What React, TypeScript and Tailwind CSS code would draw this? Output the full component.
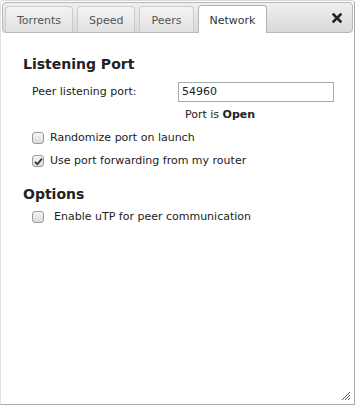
import React from 'react';

const font = { fontFamily: '"DejaVu Sans", Verdana, sans-serif' };

const tabs = ['Torrents', 'Speed', 'Peers', 'Network'];

function Box({ checked }: { checked?: boolean }) {
  return (
    <span className="w-[12px] h-[12px] rounded-[3px] border border-[#9a9a9a] bg-gradient-to-b from-[#f4f4f4] to-[#dcdcdc] flex items-center justify-center shrink-0">
      {checked && (
        <svg width="9" height="9" viewBox="0 0 9 9">
          <path d="M1 4.8 L3.4 7.2 L8 1.6" fill="none" stroke="#333" strokeWidth="1.8" />
        </svg>
      )}
    </span>
  );
}

export default function App() {
  return (
    <div className="w-[358px] h-[405px] bg-white text-[11px] text-[#222]" style={font}>
      <div className="w-[355px] h-[405px] border border-[#aaa] border-l-[#e2e2e2] border-t-[#d8d8d8] rounded-t-[4px] p-[1px] flex flex-col relative bg-white">
        {/* barra de pestañas */}
        <div className="h-[31px] rounded-[4px] border border-[#b8b8b8] bg-gradient-to-b from-[#efefef] to-[#d9d9d9] flex items-end pl-[2px] relative">
          <div className="flex gap-[4px] items-end">
            {tabs.map((t) => {
              const active = t === 'Network';
              return (
                <div
                  key={t}
                  className={
                    active
                      ? 'h-[28px] px-[11px] pt-[7px] bg-white border border-b-0 border-[#b3b3b3] rounded-t-[4px] text-[#333] -mb-[1px]'
                      : 'h-[26px] px-[11px] pt-[6px] bg-gradient-to-b from-[#f3f3f3] to-[#e2e2e2] border border-b-0 border-[#cccccc] rounded-t-[4px] text-[#555]'
                  }
                >
                  {t}
                </div>
              );
            })}
          </div>
          <svg className="absolute right-[10px] top-[10px]" width="10" height="10" viewBox="0 0 10 10">
            <path d="M1.5 1.5 L8.5 8.5 M8.5 1.5 L1.5 8.5" stroke="#222" strokeWidth="2.6" strokeLinecap="square" />
          </svg>
        </div>

        {/* contenido */}
        <div className="pl-[21px] pr-[19px] pt-[22px]">
          <h2 className="text-[14px] font-bold text-[#222] leading-[18px]">Listening Port</h2>
          <div className="pl-[9px] mt-[9px]">
            <div className="flex items-center h-[20px]">
              <span className="w-[146px]">Peer listening port:</span>
              <div className="w-[156px] h-[20px] border border-[#a9a9a9] px-[3px] leading-[18px] text-[#222]">54960</div>
            </div>
            <div className="pl-[153px] mt-[4px] leading-[18px]">
              Port is <b>Open</b>
            </div>
            <div className="flex items-center gap-[6px] mt-[5px] h-[18px]">
              <Box />
              <span>Randomize port on launch</span>
            </div>
            <div className="flex items-center gap-[6px] mt-[5px] h-[18px]">
              <Box checked />
              <span>Use port forwarding from my router</span>
            </div>
          </div>
          <h2 className="text-[14px] font-bold text-[#222] leading-[18px] mt-[15px]">Options</h2>
          <div className="pl-[9px] mt-[5px] flex items-center gap-[10px] h-[18px]">
            <Box />
            <span>Enable uTP for peer communication</span>
          </div>
        </div>

        <svg className="absolute right-[3px] bottom-[3px]" width="12" height="12" viewBox="0 0 12 12">
          <path d="M11 3 L3 11 M11 6 L6 11 M11 9 L9 11" stroke="#555" strokeWidth="1" />
        </svg>
      </div>
    </div>
  );
}
